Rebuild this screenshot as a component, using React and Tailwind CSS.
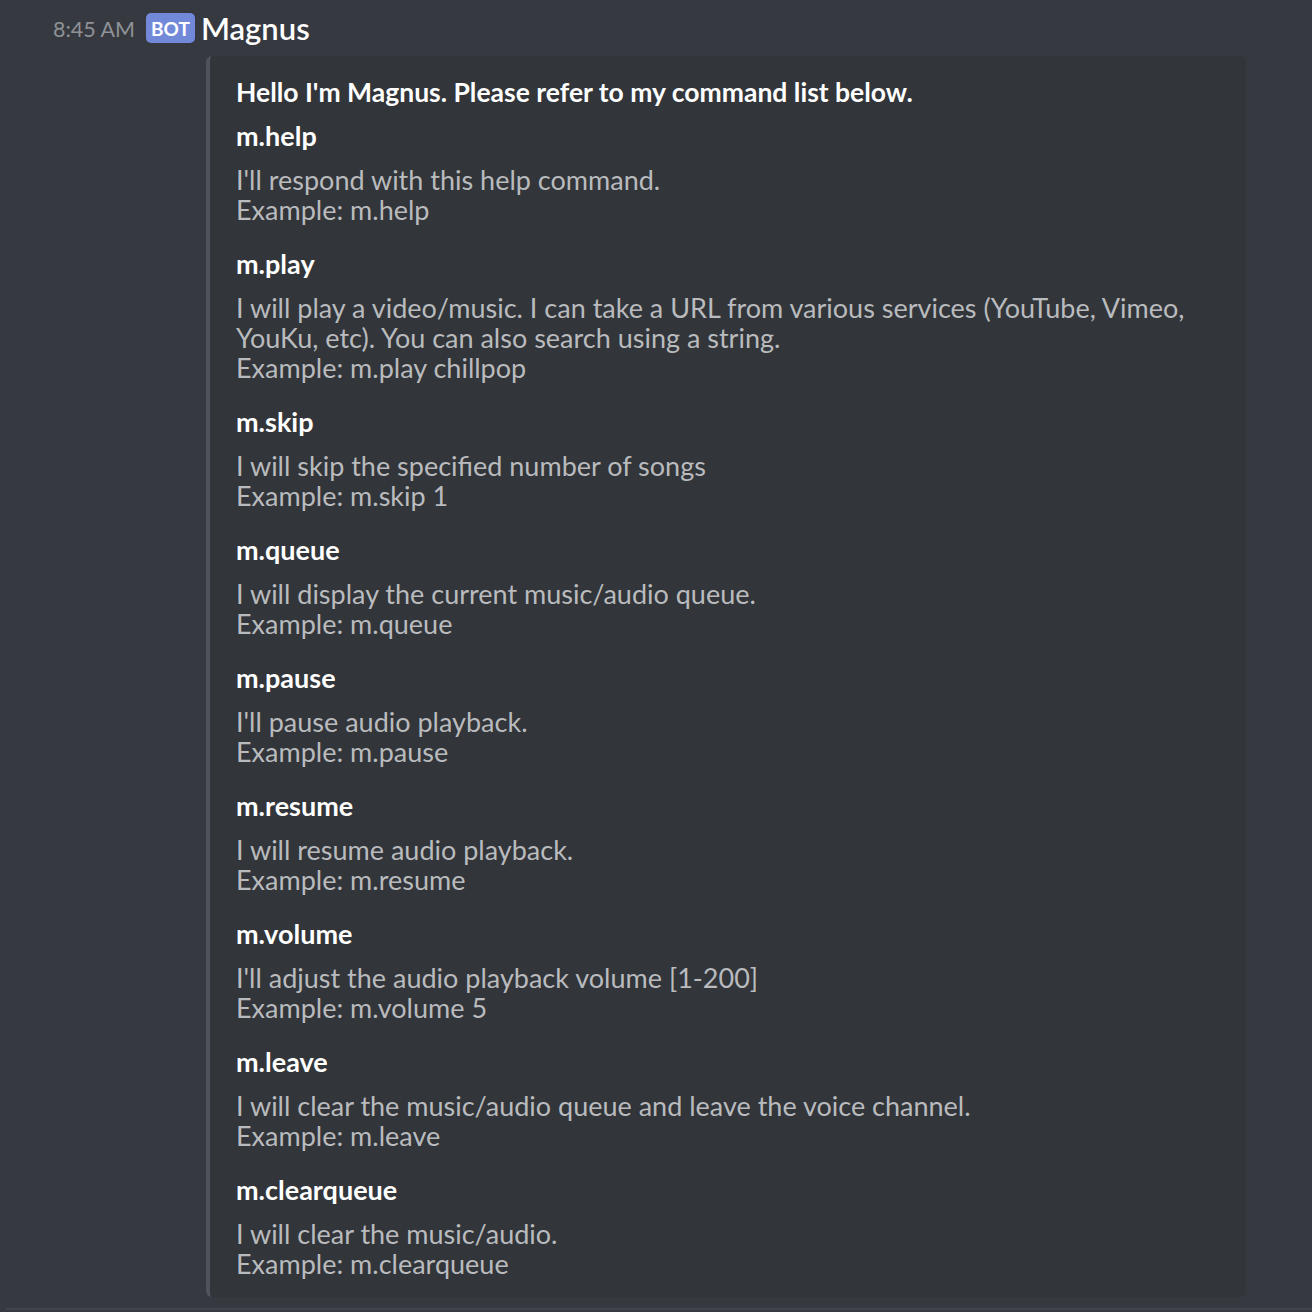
const fields = [
  { name: "m.help", lines: ["I'll respond with this help command.", "Example: m.help"] },
  { name: "m.play", lines: ["I will play a video/music. I can take a URL from various services (YouTube, Vimeo,", "YouKu, etc). You can also search using a string.", "Example: m.play chillpop"] },
  { name: "m.skip", lines: ["I will skip the specified number of songs", "Example: m.skip 1"] },
  { name: "m.queue", lines: ["I will display the current music/audio queue.", "Example: m.queue"] },
  { name: "m.pause", lines: ["I'll pause audio playback.", "Example: m.pause"] },
  { name: "m.resume", lines: ["I will resume audio playback.", "Example: m.resume"] },
  { name: "m.volume", lines: ["I'll adjust the audio playback volume [1-200]", "Example: m.volume 5"] },
  { name: "m.leave", lines: ["I will clear the music/audio queue and leave the voice channel.", "Example: m.leave"] },
  { name: "m.clearqueue", lines: ["I will clear the music/audio.", "Example: m.clearqueue"] },
];

export default function App() {
  return (
    <div className="w-[1312px] h-[1312px] bg-[#36393f] overflow-hidden flex flex-col" style={{ fontFamily: "Lato, 'Noto Sans', sans-serif" }}>
      <div className="flex items-center h-[56px] pl-[53px]">
        <span className="mt-[3px] text-[21.5px] text-[#8e9297] leading-none">8:45 AM</span>
        <span className="ml-[11px] bg-[#7289da] text-white text-[19px] font-bold rounded-[5px] h-[30px] px-[5px] flex items-center leading-none">BOT</span>
        <span className="ml-[6px] text-white text-[31px] font-semibold leading-none">Magnus</span>
      </div>
      <div className="ml-[206px] w-[1040px] h-[1241px] bg-[#323539] border-l-[4px] border-[#4f545c] rounded-[6px] pl-[26px] pt-[21px]">
        <div className="text-white font-bold text-[26.5px] leading-[30px]">Hello I'm Magnus. Please refer to my command list below.</div>
        <div className="flex flex-col">
          {fields.map((f, i) => (
            <div key={i} className={i === 0 ? "mt-[14px]" : "mt-[24px]"}>
              <div className="text-white font-bold text-[27px] leading-[30px]">{f.name}</div>
              <div className="mt-[14px] text-[#b9bbbe] text-[27px] leading-[30px]">
                {f.lines.map((l, j) => (
                  <div key={j}>{l}</div>
                ))}
              </div>
            </div>
          ))}
        </div>
      </div>
      <div className="mt-[11px] ml-[6px] h-[2px] bg-[#40444b]" />
    </div>
  );
}
